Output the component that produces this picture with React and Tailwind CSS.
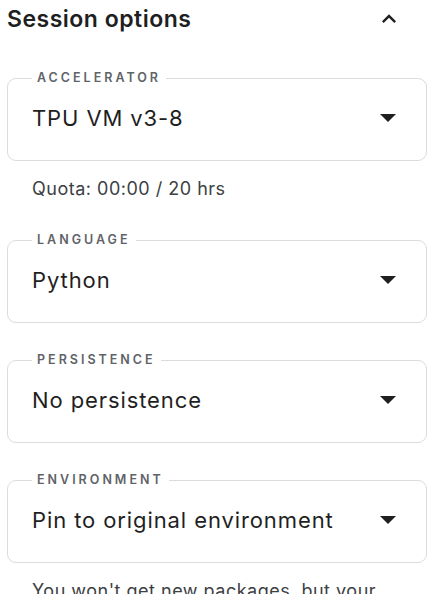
import React from 'react';

const fields = [
  { label: 'Accelerator', value: 'TPU VM v3-8', note: 'Quota: 00:00 / 20 hrs' },
  { label: 'Language', value: 'Python' },
  { label: 'Persistence', value: 'No persistence' },
  {
    label: 'Environment',
    value: 'Pin to original environment',
    note: "You won't get new packages, but your notebook will keep running the way it did when it was saved.",
  },
];

const SelectField = ({ label, value, note }) => (
  <div className="mb-[29px]">
    <fieldset className="border border-[#dadce0] rounded-[9px]">
      <legend className="ml-[24px] px-[5px] text-[12.5px] leading-[16px] font-semibold uppercase tracking-[0.24em] text-[#5f6368]">
        {label}
      </legend>
      <div className="flex items-center justify-between pl-[24px] pr-[30px] pt-[18px] pb-[28px]">
        <span className="text-[22px] leading-[28px] tracking-[0.9px] text-[#1f1f1f]">{value}</span>
        <svg width="16" height="8" viewBox="0 0 16 8" className="shrink-0">
          <path d="M0 0h16L8 8z" fill="#1f1f1f" />
        </svg>
      </div>
    </fieldset>
    {note && (
      <p className="mt-4 pb-[2px] pl-[25px] pr-4 text-[18px] leading-[24px] tracking-[0.5px] text-[#3c4043]">
        {note}
      </p>
    )}
  </div>
);

export default function App() {
  return (
    <div className="min-h-screen bg-white pl-[7px] pr-[8px] pt-[5px] font-['Inter',sans-serif]">
      <div className="flex items-center justify-between">
        <h2 className="text-[23px] leading-[28px] font-semibold tracking-[0.5px] text-[#1f1f1f]">Session options</h2>
        <button className="mr-[24px] -mt-[1px]">
          <svg width="28" height="28" viewBox="0 0 24 24">
            <path d="M12 8l-6 6 1.41 1.41L12 10.83l4.59 4.58L18 14z" fill="#1f1f1f" />
          </svg>
        </button>
      </div>
      <div className="mt-[37px]">
        {fields.map((f) => (
          <SelectField key={f.label} {...f} />
        ))}
      </div>
    </div>
  );
}
